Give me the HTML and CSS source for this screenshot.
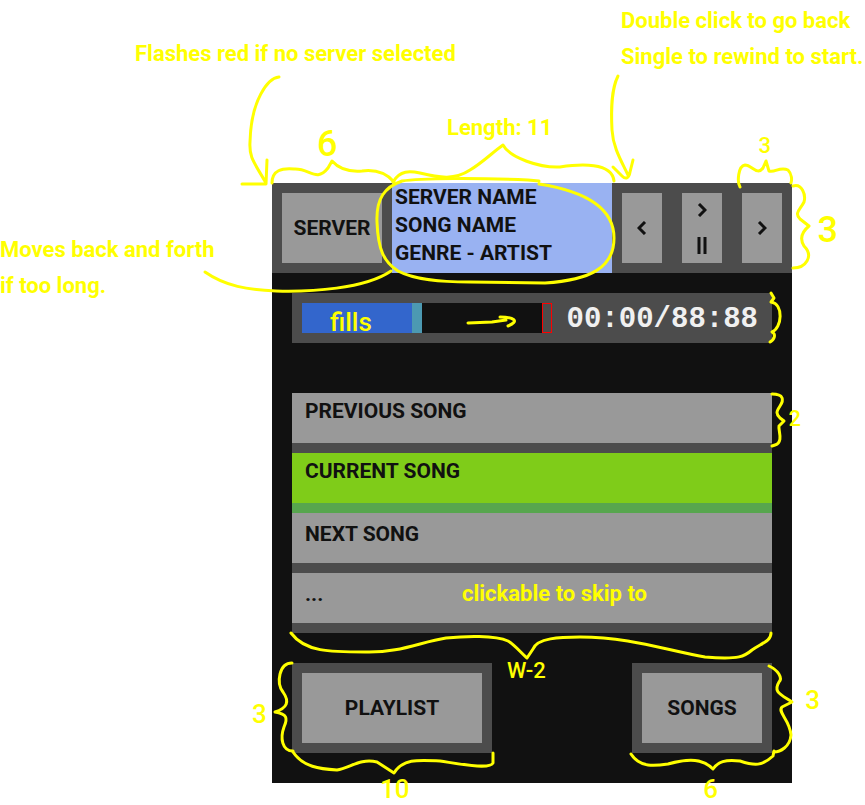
FILE: index.html
```html
<!DOCTYPE html>
<html lang="en">
<head>
<meta charset="utf-8">
<title>Music player layout</title>
<link rel="stylesheet" href="styles.css">
</head>
<body>
<main class="board">
  <section class="player" aria-label="Music player">
    <header class="topbar">
      <button class="key key-server" type="button">SERVER</button>
      <div class="display">
        <p>SERVER NAME</p>
        <p>SONG NAME</p>
        <p>GENRE - ARTIST</p>
      </div>
      <div class="transport">
        <button class="control" type="button" aria-label="Previous"><svg width="10" height="14" viewBox="0 0 10 14"><path d="M8 1 2 7l6 6"/></svg></button>
        <button class="control" type="button" aria-label="Play or pause"><svg width="10" height="14" viewBox="0 0 10 14"><path d="m2 1 6 6-6 6"/></svg><svg width="10" height="17" viewBox="0 0 10 17"><path d="M2 0v17M8 0v17"/></svg></button>
        <button class="control" type="button" aria-label="Next"><svg width="10" height="14" viewBox="0 0 10 14"><path d="m2 1 6 6-6 6"/></svg></button>
      </div>
    </header>
    <div class="progress">
      <div class="track"><div class="fill"></div><div class="end"></div></div>
      <time class="time">00:00/88:88</time>
    </div>
    <div class="songs">
      <button class="song" type="button">PREVIOUS SONG</button>
      <button class="song current" type="button">CURRENT SONG</button>
      <button class="song upcoming" type="button">NEXT SONG</button>
      <button class="song upcoming" type="button">...</button>
    </div>
    <footer class="actions">
      <button class="key key-playlist" type="button">PLAYLIST</button>
      <button class="key key-songs" type="button">SONGS</button>
    </footer>
  </section>

  <svg class="ink" viewBox="0 0 865 805" preserveAspectRatio="none" aria-hidden="true">
    <path d="M279 77C268 78 251 100 250 142C249 158 254 162 266 183M267 160L266 184L242 184"/>
    <path d="M272 183C272 170 282 168 294 169C310 168 316 183 328 168L332 161C340 170 350 172 362 171C378 169 388 175 394 182"/>
    <path d="M393 182C400 170 410 171 420 173C440 178 455 180 470 170C482 163 493 152 503 145C510 158 540 168 560 167C580 164 612 162 614 181"/>
    <path d="M539 181L528 180C480 178 420 178 402 181C385 187 376 198 377 222C378 250 384 262 398 271C415 280 440 282 470 282L545 283C590 280 614 268 614 238C614 210 590 192 539 184"/>
    <path d="M205 272C225 286 248 290 276 291C310 292 365 289 391 271"/>
    <path d="M618 76C611 90 611 110 612 130C613 148 622 162 628 175M613 167L622 176C626 180 629 178 630 172L633 160"/>
    <path d="M740 187C737 182 738 166 745 165C752 165 757 176 763 168L766 161L769 171C775 173 780 166 788 170C792 174 792 180 791 183"/>
    <path d="M793 186C802 183 806 195 804 202C800 210 794 213 800 219L809 226C803 231 799 238 804 246C814 256 806 268 793 268"/>
    <path d="M468 323L492 322L506 320M500 317C514 317 520 321 508 326"/>
    <path d="M771 293L774 298L771 302C784 304 782 328 772 332C776 334 775 339 770 342"/>
    <path d="M772 394C784 394 784 400 780 406C776 412 776 414 780 418L784 421L779 426C778 430 784 442 775 445L772 446"/>
    <path d="M291 633C305 652 330 652 365 652C400 653 420 642 446 638C465 636 495 635 508 641C515 645 520 652 527 658L533 649C537 638 560 637 580 637C630 637 665 650 705 657C740 660 745 656 752 650C762 643 771 641 771 633"/>
    <path d="M292 663C279 663 276 683 283 692C290 702 287 708 275 712C287 714 288 718 284 727C280 738 282 751 293 751"/>
    <path d="M293 752C303 767 320 769 337 770C350 768 360 758 377 762L394 773C403 758 420 760 440 761C460 764 490 770 493 763L493 753"/>
    <path d="M631 754C640 768 655 766 668 764C690 758 703 759 713 769C718 762 725 759 740 761C755 766 762 766 773 756L774 751"/>
    <path d="M769 666C778 670 783 678 779 682C773 692 780 694 792 702L782 707C777 712 790 720 791 735C790 747 780 752 774 752"/>
  </svg>

  <p class="note note-server">Flashes red if no server selected</p>
  <p class="note note-length">Length: 11</p>
  <p class="note note-rewind">Double click to go back<br>Single to rewind to start.</p>
  <p class="note note-scroll">Moves back and forth<br>if too long.</p>
  <p class="note note-skip">clickable to skip to</p>
  <p class="mark mark-large mark-server">6</p>
  <p class="mark mark-small mark-next">3</p>
  <p class="mark mark-large mark-bar">3</p>
  <p class="mark mark-fills">fills</p>
  <p class="mark mark-small mark-row">2</p>
  <p class="mark mark-small mark-width">W-2</p>
  <p class="mark mark-playlist-height">3</p>
  <p class="mark mark-playlist-width">10</p>
  <p class="mark mark-songs-height">3</p>
  <p class="mark mark-songs-width">6</p>
</main>
</body>
</html>
```
FILE: styles.css
```css
* { box-sizing: border-box; }

body {
  margin: 0;
  background: #fff;
  color: #111;
  font-family: "Roboto", sans-serif;
  font-size: 21px;
  font-weight: bold;
  line-height: 30px;
}

p { margin: 0; }

button {
  margin: 0;
  padding: 0;
  border: 0;
  border-radius: 0;
  color: inherit;
  background: #999;
  font: inherit;
  cursor: pointer;
}

.board {
  position: relative;
  padding: 183px 73px 22px 272px;
  overflow: hidden;
}

.player {
  display: flex;
  flex-direction: column;
  background: #111;
  padding-bottom: 30px;
}

.topbar {
  display: flex;
  height: 90px;
  background: #4c4c4c;
}

.key {
  height: 90px;
  border: 10px solid #4c4c4c;
}

.key-server { width: 120px; }
.key-playlist { width: 200px; }
.key-songs { width: 140px; }

.display {
  flex: 1;
  padding-left: 3px;
  background: #99b2f2;
  line-height: 28px;
  white-space: nowrap;
}

.transport {
  display: flex;
  gap: 20px;
  padding: 10px;
}

.control {
  display: flex;
  flex-direction: column;
  align-items: center;
  justify-content: center;
  gap: 20px;
  width: 40px;
}

.control svg {
  fill: none;
  stroke: #111;
  stroke-width: 3px;
}

.progress {
  display: flex;
  align-items: center;
  justify-content: space-between;
  margin: 20px 20px 50px;
  padding: 10px;
  background: #4c4c4c;
}

.track {
  display: flex;
  justify-content: space-between;
  width: 250px;
  height: 30px;
  background: #111;
}

.fill {
  width: 120px;
  background: #36c;
  border-right: 10px solid #4c99b2;
}

.end {
  width: 10px;
  border: 1px solid #f00;
  background: #4c4c4c;
}

.time {
  color: #f0f0f0;
  font-family: "Liberation Mono", monospace;
  font-size: 29px;
  line-height: 26px;
  padding: 4px 4px 0 0;
}

.songs {
  display: flex;
  flex-direction: column;
  margin: 0 20px 30px;
}

.song {
  display: flex;
  height: 60px;
  padding: 3px 13px;
  border-bottom: 10px solid #4c4c4c;
}

.current {
  background: #7fcc19;
  border-color: #57a64e;
}

.upcoming { padding-top: 6px; }

.actions {
  display: flex;
  justify-content: space-between;
  margin: 0 20px;
}

/* Hand-drawn annotations laid over the player */
.ink {
  position: absolute;
  inset: 0;
  width: 100%;
  height: 100%;
  fill: none;
  stroke: #ff0;
  stroke-width: 3px;
  stroke-linecap: round;
  stroke-linejoin: round;
  pointer-events: none;
}

.note,
.mark {
  position: absolute;
  color: #ff0;
  white-space: nowrap;
  pointer-events: none;
}

.note {
  font-size: 22px;
  line-height: 36px;
}

.note-server { left: 135px; top: 36px; }
.note-length { left: 447px; top: 110px; }
.note-rewind { left: 621px; top: 3px; }
.note-scroll { left: 0; top: 232px; }
.note-skip { left: 462px; top: 576px; }

.mark {
  font-weight: 500;
  font-size: 26px;
  line-height: 28px;
}

.mark-large { font-size: 36px; }
.mark-small { font-size: 22px; }
.mark-server { left: 317px; top: 130px; }
.mark-next { right: 94px; top: 132px; }
.mark-bar { right: 27px; top: 216px; }
.mark-fills { left: 330px; top: 308px; }
.mark-row { right: 64px; top: 405px; }
.mark-width { left: 507px; top: 657px; }
.mark-playlist-height { left: 252px; top: 700px; }
.mark-playlist-width { left: 380px; top: 775px; }
.mark-songs-height { right: 45px; top: 686px; }
.mark-songs-width { right: 147px; top: 775px; }
```
